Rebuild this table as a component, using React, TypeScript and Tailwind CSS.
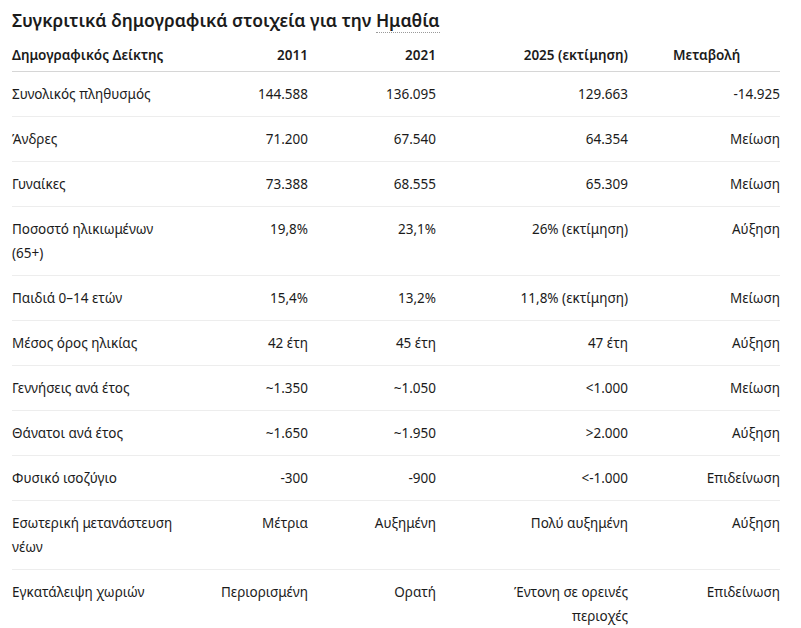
const rows: Array<[string, string, string, string, string]> = [
  ["Συνολικός πληθυσμός", "144.588", "136.095", "129.663", "-14.925"],
  ["Άνδρες", "71.200", "67.540", "64.354", "Μείωση"],
  ["Γυναίκες", "73.388", "68.555", "65.309", "Μείωση"],
  ["Ποσοστό ηλικιωμένων (65+)", "19,8%", "23,1%", "26% (εκτίμηση)", "Αύξηση"],
  ["Παιδιά 0–14 ετών", "15,4%", "13,2%", "11,8% (εκτίμηση)", "Μείωση"],
  ["Μέσος όρος ηλικίας", "42 έτη", "45 έτη", "47 έτη", "Αύξηση"],
  ["Γεννήσεις ανά έτος", "~1.350", "~1.050", "<1.000", "Μείωση"],
  ["Θάνατοι ανά έτος", "~1.650", "~1.950", ">2.000", "Αύξηση"],
  ["Φυσικό ισοζύγιο", "-300", "-900", "<-1.000", "Επιδείνωση"],
  ["Εσωτερική μετανάστευση νέων", "Μέτρια", "Αυξημένη", "Πολύ αυξημένη", "Αύξηση"],
  ["Εγκατάλειψη χωριών", "Περιορισμένη", "Ορατή", "Έντονη σε ορεινές περιοχές", "Επιδείνωση"],
];

export default function App() {
  return (
    <div className="min-h-screen bg-white px-3 pt-[6px] font-['Segoe_UI','Noto_Sans','Open_Sans',sans-serif] text-[#1b1b1b]">
      <h2 className="text-[17.5px] font-semibold leading-[28px]">
        Συγκριτικά δημογραφικά στοιχεία για την{" "}
        <span className="border-b border-dotted border-[#9a9a9a]">Ημαθία</span>
      </h2>
      <table className="mt-[5px] w-[768px] table-fixed border-collapse text-[13.5px] leading-[24px]">
        <colgroup>
          <col className="w-[186px]" />
          <col className="w-[122px]" />
          <col className="w-[128px]" />
          <col className="w-[192px]" />
          <col className="w-[140px]" />
        </colgroup>
        <thead>
          <tr className="border-b border-[#d6d6d6]">
            <th className="py-[4px] pr-3 text-left font-semibold">Δημογραφικός Δείκτης</th>
            <th className="px-3 py-[4px] text-right font-semibold">2011</th>
            <th className="px-3 py-[4px] text-right font-semibold">2021</th>
            <th className="px-3 py-[4px] text-right font-semibold">2025 (εκτίμηση)</th>
            <th className="py-[4px] pl-[33px] text-left font-semibold">Μεταβολή</th>
          </tr>
        </thead>
        <tbody>
          {rows.map((r) => (
            <tr key={r[0]} className="border-b border-[#ededed] align-top last:border-b-0">
              <td className="py-[10px] pr-3 text-left">{r[0]}</td>
              <td className="px-3 py-[10px] text-right">{r[1]}</td>
              <td className="px-3 py-[10px] text-right">{r[2]}</td>
              <td className="px-3 py-[10px] text-right">{r[3]}</td>
              <td className="py-[10px] pl-3 text-right">{r[4]}</td>
            </tr>
          ))}
        </tbody>
      </table>
    </div>
  );
}
